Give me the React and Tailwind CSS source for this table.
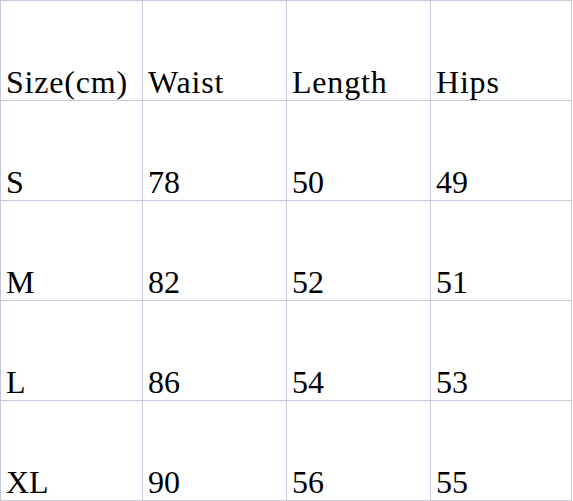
const HEAD = ['Size(cm)', 'Waist', 'Length', 'Hips'];

const ROWS = [
  ['S', '78', '50', '49'],
  ['M', '82', '52', '51'],
  ['L', '86', '54', '53'],
  ['XL', '90', '56', '55'],
];

function Cell({ children, head }) {
  return (
    <div
      className={
        'h-[100px] border-r border-b border-[#c9c9dd] flex items-end pl-[5px] font-["Liberation_Serif",serif] text-[32px] leading-[32px] ' +
        (head ? 'pb-[2px] tracking-[0.8px]' : 'pb-[2px]')
      }
    >
      <span className="whitespace-nowrap">{children}</span>
    </div>
  );
}

export default function App() {
  return (
    <div className="w-[573px] h-[501px] bg-white text-black">
      <div className="grid grid-cols-[142px_144px_144px_141px] w-[572px] border-t border-l border-[#c9c9dd]">
        {HEAD.map((h) => (
          <Cell key={h} head>{h}</Cell>
        ))}
        {ROWS.map((row) =>
          row.map((v, i) => <Cell key={row[0] + i}>{v}</Cell>)
        )}
      </div>
    </div>
  );
}
